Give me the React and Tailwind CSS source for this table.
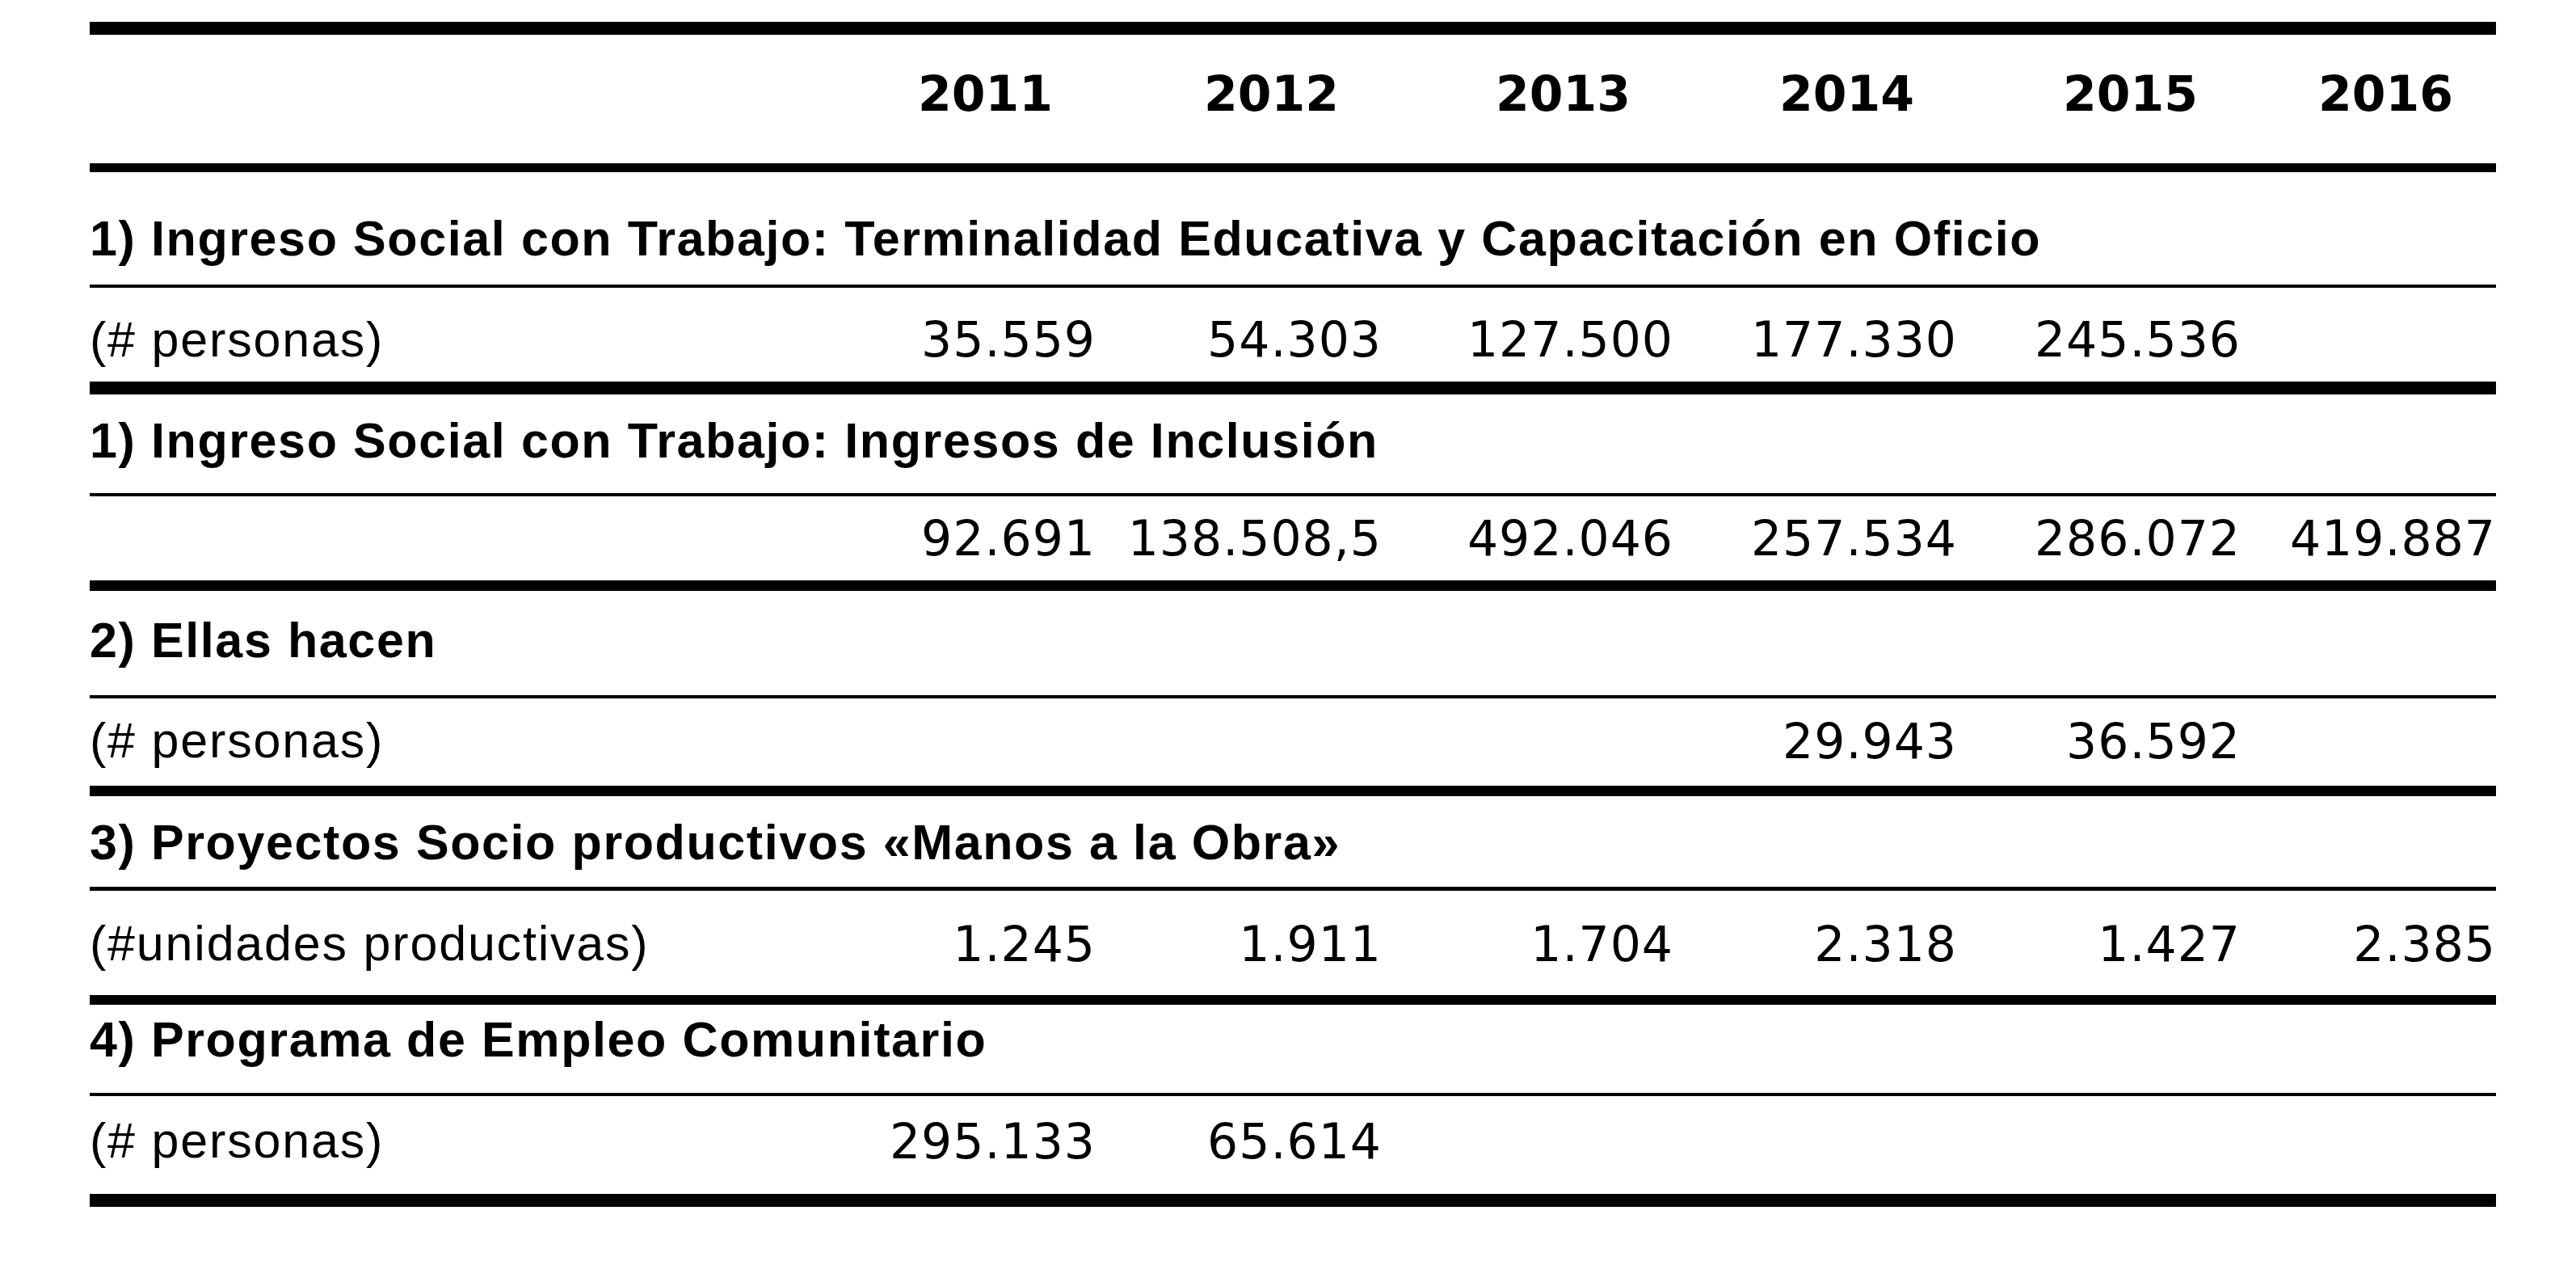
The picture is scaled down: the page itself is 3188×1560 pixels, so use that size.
import React from "react";

const GRID = "grid grid-cols-[891px_354px_354px_361px_351px_351px_316px]";
const LABEL = "font-[family-name:Liberation_Sans,Arial,sans-serif] text-[61px] leading-none text-black";
const NUM = "font-[family-name:DejaVu_Sans,sans-serif] text-[60px] leading-none tracking-[1px] text-black text-right";

function Rule({ h }) {
  return <div className={`${h} bg-black`} />;
}

function Title({ children, cls }) {
  return (
    <div className={`flex items-center ${cls}`}>
      <span className={`${LABEL} font-bold tracking-[1.6px] whitespace-nowrap`}>{children}</span>
    </div>
  );
}

function DataRow({ label, values, cls }) {
  return (
    <div className={`${GRID} items-center ${cls}`}>
      <span className={`${LABEL} tracking-[1.8px] whitespace-nowrap`}>{label}</span>
      {values.map((v, i) => (
        <span key={i} className={NUM}>
          {v}
        </span>
      ))}
    </div>
  );
}

export default function App() {
  const years = ["2011", "2012", "2013", "2014", "2015", "2016"];
  return (
    <div className="w-[3188px] h-[1560px] bg-white pt-[27px] pl-[111px]">
      <div className="w-[2978px] flex flex-col">
        <Rule h="h-[16px]" />
        <div className={`${GRID} items-center h-[159px] pb-[14px]`}>
          <span />
          {years.map((y) => (
            <span
              key={y}
              className="font-[family-name:DejaVu_Sans,sans-serif] font-bold text-[60px] leading-none text-black text-right pr-[53px]"
            >
              {y}
            </span>
          ))}
        </div>
        <Rule h="h-[11px]" />
        <Title cls="h-[139px] pt-[25px]">
          1) Ingreso Social con Trabajo: Terminalidad Educativa y Capacitación en Oficio
        </Title>
        <Rule h="h-[4px]" />
        <DataRow
          cls="h-[116px] pt-[12px]"
          label="(# personas)"
          values={["35.559", "54.303", "127.500", "177.330", "245.536", ""]}
        />
        <Rule h="h-[16px]" />
        <Title cls="h-[122px] pb-[8px]">1) Ingreso Social con Trabajo: Ingresos de Inclusión</Title>
        <Rule h="h-[4px]" />
        <DataRow
          cls="h-[104px]"
          label=""
          values={["92.691", "138.508,5", "492.046", "257.534", "286.072", "419.887"]}
        />
        <Rule h="h-[13px]" />
        <Title cls="h-[129px] pb-[7px]">2) Ellas hacen</Title>
        <Rule h="h-[4px]" />
        <DataRow
          cls="h-[108px] pb-[3px]"
          label="(# personas)"
          values={["", "", "", "29.943", "36.592", ""]}
        />
        <Rule h="h-[13px]" />
        <Title cls="h-[112px] pt-[3px]">3) Proyectos Socio productivos «Manos a la Obra»</Title>
        <Rule h="h-[5px]" />
        <DataRow
          cls="h-[129px] pt-[2px]"
          label="(#unidades productivas)"
          values={["1.245", "1.911", "1.704", "2.318", "1.427", "2.385"]}
        />
        <Rule h="h-[12px]" />
        <Title cls="h-[109px] pb-[22px]">4) Programa de Empleo Comunitario</Title>
        <Rule h="h-[4px]" />
        <DataRow
          cls="h-[121px] pb-[10px]"
          label="(# personas)"
          values={["295.133", "65.614", "", "", "", ""]}
        />
        <Rule h="h-[16px]" />
      </div>
    </div>
  );
}
